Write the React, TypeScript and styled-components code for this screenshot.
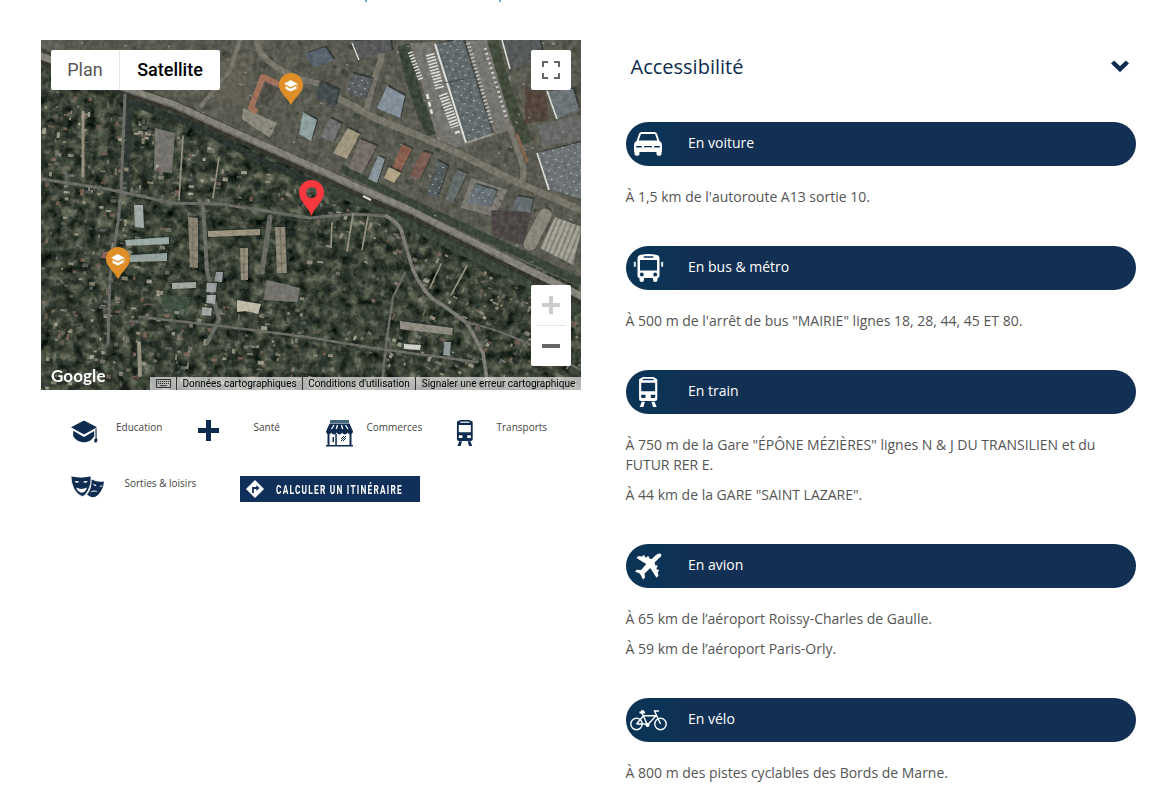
import React from 'react';
import styled, { createGlobalStyle } from 'styled-components';

const NAVY = '#10305a';
const INK = '#0e2c50';

const GlobalStyle = createGlobalStyle`
  body { margin: 0; background: #fff; font-family: 'Open Sans', 'Noto Sans', sans-serif; overflow: hidden; }
  p, h2 { margin: 0; }
  svg { display: block; flex: none; }
`;

const Page = styled.div`
  width: 1160px;
  height: 797px;
  overflow: hidden;
  display: flex;
  flex-direction: column;
`;

const LinkTail = styled.div`
  height: 2px;
  flex: none;
  padding-left: 365px;
  display: flex;
  gap: 132px;
`;

const Tail = styled.i`
  width: 2px;
  height: 2px;
  background: #5fb3cc;
`;

const Columns = styled.div`
  display: flex;
  padding: 38px 24px 0 41px;
  gap: 45px;
`;

const LeftColumn = styled.section`
  width: 540px;
  flex: none;
`;

const MapFrame = styled.div`
  position: relative;
  width: 540px;
  height: 350px;
  overflow: hidden;
  font-family: Roboto, sans-serif;
`;

const MapTypeBar = styled.div`
  position: absolute;
  left: 10px;
  top: 10px;
  display: flex;
  height: 40px;
  background: #fff;
  border-radius: 2px;
`;

const MapType = styled.button<{ $active?: boolean }>`
  border: 0;
  border-left: ${(p) => (p.$active ? '1px solid #e6e6e6' : '0')};
  background: none;
  padding: 0 0 2px;
  width: ${(p) => (p.$active ? 101 : 68)}px;
  font: ${(p) => (p.$active ? 500 : 400)} 18px Roboto, sans-serif;
  color: ${(p) => (p.$active ? '#000' : '#565656')};
`;

const FullscreenButton = styled.button`
  position: absolute;
  right: 10px;
  top: 10px;
  width: 40px;
  height: 40px;
  border: 0;
  border-radius: 2px;
  background: #fff;
  padding: 11px;
`;

const ZoomControl = styled.div`
  position: absolute;
  right: 10px;
  top: 245px;
  width: 40px;
  height: 81px;
  border-radius: 2px;
  background: #fff;
  display: flex;
  flex-direction: column;
  align-items: center;
`;

const ZoomKey = styled.div`
  height: 40px;
  display: flex;
  align-items: center;
`;

const ZoomRule = styled.div`
  width: 30px;
  height: 1px;
  background: #e6e6e6;
`;

const GoogleMark = styled.div`
  position: absolute;
  left: 10px;
  bottom: 3px;
  color: #fff;
  font: 700 17px/22px Lato, sans-serif;
  letter-spacing: 0.1px;
`;

const Attribution = styled.div`
  position: absolute;
  right: 0;
  bottom: 0;
  height: 13px;
  width: 431px;
  display: flex;
  align-items: center;
  background: rgba(235, 235, 235, 0.7);
  color: #000;
  font: 10px/13px Roboto, sans-serif;
  white-space: nowrap;
`;

const AttributionItem = styled.span<{ $width: number }>`
  box-sizing: border-box;
  width: ${(p) => p.$width}px;
  height: 13px;
  display: flex;
  align-items: center;
  justify-content: center;
  & + & { border-left: 1px solid #333; }
`;

const Pin = styled.div<{ $x: number; $y: number }>`
  position: absolute;
  left: ${(p) => p.$x}px;
  top: ${(p) => p.$y}px;
`;

const Legend = styled.div`
  padding: 29px 0 0 30px;
`;

const LegendRow = styled.div`
  display: flex;
  height: 28px;
  margin-bottom: 28px;
`;

const LegendCell = styled.div<{ $width: number; $icon: number }>`
  width: ${(p) => p.$width}px;
  flex: none;
  display: grid;
  grid-template-columns: ${(p) => p.$icon}px 1fr;
  font-size: 10px;
  line-height: 17px;
  color: #444;
  white-space: nowrap;
`;

const LegendIcon = styled.div`
  padding-top: 1px;
`;

const RouteButton = styled.button`
  width: 180px;
  height: 26px;
  margin: 1px 0 0;
  padding: 0 0 0 5px;
  border: 0;
  background: ${NAVY};
  color: #fff;
  display: flex;
  align-items: center;
  gap: 11px;
  text-align: left;
`;

const RouteText = styled.span`
  font: 700 13.500px/28px Roboto, sans-serif;
  letter-spacing: 2px;
  white-space: nowrap;
  transform: scaleX(0.615);
  transform-origin: left center;
`;

const RightColumn = styled.section`
  width: 510px;
`;

const Heading = styled.div`
  height: 52px;
  margin-bottom: 30px;
  padding: 0 7px 0 4.500px;
  display: flex;
  align-items: center;
  justify-content: space-between;
`;

const Title = styled.h2`
  font-size: 20px;
  line-height: 28px;
  padding-top: 2px;
  font-weight: 400;
  color: ${INK};
`;

const Entry = styled.article`
  padding-bottom: 29px;
`;

const Bar = styled.header`
  height: 44px;
  margin-bottom: 21px;
  border-radius: 22px;
  background: linear-gradient(90deg, #0b3355 0 34px, #123053 60px);
  display: flex;
  align-items: center;
  color: #fff;
  font-size: 14px;
`;

const BarIcon = styled.div`
  width: 44px;
  margin-right: 18px;
  display: flex;
  justify-content: center;
`;

const BarLabel = styled.span`
  margin-top: -3px;
  line-height: 20px;
`;

const Line = styled.p`
  margin: 0 0 10px -0.500px;
  font-size: 14px;
  line-height: 20px;
  color: #555;
`;

/* ---------- aerial view ---------- */

const makeRandom = (seed: number) => () => {
  seed = (seed + 0x6d2b79f5) | 0;
  let t = Math.imul(seed ^ (seed >>> 15), 1 | seed);
  t = (t + Math.imul(t ^ (t >>> 7), 61 | t)) ^ t;
  return ((t ^ (t >>> 14)) >>> 0) / 4294967296;
};

const railY = (x: number) => 48 + (x - 76) * 0.452;

type Patch = { x: number; y: number; w: number; h: number; a: number; fill: string };

const ROOFS = ['#8b8578', '#a0988a', '#75736e', '#8f7263', '#b3a995', '#6d706e', '#c6c0ae', '#7d655b'];
const TREES = ['#26302b', '#303a31', '#3c4638', '#1f2825', '#464e40', '#353e37'];

const rnd = makeRandom(47);
const trees: Patch[] = [];
const houses: Patch[] = [];
for (let i = 0; i < 2600; i++) {
  const x = rnd() * 540;
  const y = rnd() * 350;
  const s = 2 + rnd() * 5;
  const fill = TREES[Math.floor(rnd() * TREES.length)];
  if (y > railY(x) + 8) trees.push({ x, y, w: s, h: s * (0.6 + rnd() * 0.6), a: rnd() * 90, fill });
}
for (let i = 0; i < 1500; i++) {
  const x = rnd() * 540;
  const y = rnd() * 350;
  const w = 1.5 + rnd() * 5;
  const h = 1.2 + rnd() * 2.8;
  const fill = ROOFS[Math.floor(rnd() * ROOFS.length)];
  const a = (x > 300 ? 25 : 4) + (rnd() > 0.7 ? 90 : 0);
  const estate = x > 125 && x < 262 && y > 165 && y < 262;
  const grove = x > 262 && x < 350 && y > 210 && y < 290 && rnd() > 0.25;
  if (y > railY(x) + 16 && !estate && !grove) houses.push({ x, y, w, h, a, fill });
}
const yardShrubs: Patch[] = [];
const yardCars: Patch[] = [];
for (let i = 0; i < 620; i++) {
  const x = rnd() * 540;
  const y = rnd() * 250;
  const s = 2 + rnd() * 6;
  const car = rnd() > 0.5;
  const light = rnd() > 0.5;
  if (y < railY(x) - 8) {
    if (car) yardCars.push({ x, y, w: 2.6, h: 1.2, a: 25, fill: light ? '#a4a6a4' : '#444a4a' });
    else yardShrubs.push({ x, y, w: s, h: s * 0.7, a: 25, fill: light ? '#4b5044' : '#3c443b' });
  }
}

const Patches = ({ items, opacity }: { items: Patch[]; opacity: number }) => (
  <g opacity={opacity}>
    {items.map((p, i) => (
      <rect key={i} x={p.x} y={p.y} width={p.w} height={p.h} fill={p.fill} transform={`rotate(${p.a.toFixed(0)} ${p.x} ${p.y})`} />
    ))}
  </g>
);

const GROUND: [string, string][] = [
  ['369,3 446,0 472,89 416,108 396,99', '#777570'],
  ['202,68 236,83 229,98 201,79', '#8b887c'],
  ['166,24 212,10 208,66 176,60', '#625f54'],
  ['114,88 134,93 131,133 113,131', '#74736d'],
  ['226,240 259,248 256,262 222,260', '#74736d'],
  ['122,255 150,257 144,277 120,271', '#3f5040'],
  ['430,138 466,150 454,177 420,168', '#7c7a73'],
  ['450,170 490,172 483,205 452,196', '#4d4746'],
  ['484,45 504,52 508,80 484,84', '#54463d'],
  ['496,85 540,75 540,100 502,106', '#686a68'],
];

const BUILDINGS: [string, string][] = [
  ['311,1 349,-1 351,11 317,19', '#57595b'],
  ['311,33 332,39 324,59 304,51', '#5b5e60'],
  ['346,46 364,56 359,78 336,68', '#84909a'],
  ['264,14 284,7 293,20 272,28', '#59636c'],
  ['279,41 298,50 294,67 275,58', '#434b4f'],
  ['262,72 276,80 270,101 258,94', '#8fa0a0'],
  ['394,4 422,-1 451,93 424,103', '#636a6b'],
  ['461,-1 499,-1 502,19 469,29', '#565a5b'],
  ['506,51 532,49 538,69 516,79', '#6c7478'],
  ['496,113 541,102 541,159 507,149', '#6c7173'],
  ['289,78 301,84 292,103 279,96', '#6f7170'],
  ['307,88 319,94 306,119 292,113', '#a1977f'],
  ['319,99 336,106 321,134 307,128', '#756d67'],
  ['337,116 344,119 336,143 327,139', '#87959b'],
  ['361,104 371,109 359,133 351,128', '#8a6150'],
  ['348,127 360,133 353,143 343,138', '#b1a486'],
  ['381,111 391,114 379,139 369,136', '#785c52'],
  ['397,121 407,126 396,159 386,154', '#545c5e'],
  ['416,129 426,134 412,163 404,159', '#636b6b'],
  ['434,144 456,151 449,167 427,162', '#677075'],
  ['476,156 492,159 489,173 471,169', '#666d71'],
  ['93,165 102,165 103,188 94,187', '#a0a8a6'],
  ['84,200 128,197 128,204 85,206', '#9ba9a5'],
  ['89,215 126,213 126,221 89,222', '#93a09c'],
  ['147,177 157,178 157,228 149,227', '#8a8473'],
  ['167,191 219,189 219,195 167,197', '#9a9480'],
  ['199,208 207,208 207,240 200,240', '#918b78'],
  ['234,187 244,187 246,233 236,233', '#8d8776'],
  ['131,243 155,242 155,248 131,249', '#a4a6a0'],
  ['175,232 182,232 181,242 173,242', '#8f9596'],
  ['166,243 176,243 175,252 165,252', '#9a9f9f'],
  ['166,255 175,255 174,264 165,263', '#a8abab'],
  ['161,267 171,268 170,276 161,275', '#a3a6a3'],
  ['196,260 220,264 217,274 206,271 196,272', '#bdb9a6'],
  ['359,281 412,288 411,295 359,289', '#8f8c82'],
  ['363,304 380,305 379,310 363,309', '#d2d2cd'],
  ['403,302 410,302 409,316 402,315', '#8e9698'],
  ['62,212 70,211 68,219 60,218', '#8d6256'],
];

const AerialView = () => (
  <svg width="540" height="350" viewBox="0 0 540 350">
    <defs>
      <filter id="foliage" x="0" y="0" width="100%" height="100%" colorInterpolationFilters="sRGB">
        <feTurbulence type="fractalNoise" baseFrequency="0.09" numOctaves="4" seed="8" />
        <feColorMatrix values="0.62 0 0 0 -0.08  0.6 0 0 0 -0.04  0.52 0 0 0 -0.05  0 0 0 0 1" />
      </filter>
      <filter id="grain" x="0" y="0" width="100%" height="100%" colorInterpolationFilters="sRGB">
        <feTurbulence type="fractalNoise" baseFrequency="0.22" numOctaves="2" seed="3" />
        <feColorMatrix values="1.6 0 0 0 -0.3  1.6 0 0 0 -0.3  1.6 0 0 0 -0.3  0 0 0 0 1" />
      </filter>
      <pattern id="skylights" width="10" height="9" patternUnits="userSpaceOnUse" patternTransform="rotate(-18)">
        <rect x="2" y="2" width="1.6" height="1" fill="#c5cccb" />
        <rect x="7" y="6" width="1.4" height="1" fill="#aeb6b5" />
      </pattern>
      <pattern id="sheds" width="5" height="5" patternUnits="userSpaceOnUse" patternTransform="rotate(22)">
        <rect width="5" height="5" fill="#a5a297" />
        <rect width="1.4" height="5" fill="#77776f" />
      </pattern>
    </defs>
    <rect width="540" height="350" filter="url(#foliage)" />
    <Patches items={trees} opacity={0.6} />
    <polygon points="0,0 540,0 540,248 200,96 86,45 0,8" fill="#636158" opacity="0.78" />
    <Patches items={yardShrubs} opacity={0.8} />
    <g fill="none" stroke="#3b4538">
      <path d="M362,5 Q372,55 391,95" strokeWidth="11" />
      <path d="M451,0 Q462,50 487,103" strokeWidth="12" stroke="#424a3b" />
      <path d="M262,136 L350,176 L440,220 L540,270" strokeWidth="9" />
      <path d="M300,128 L370,163 L450,200 L540,242" strokeWidth="8" />
      <path d="M78,58 L150,84 L230,125 L270,142" strokeWidth="7" stroke="#2c342f" />
      <path d="M88,60 L84,150" strokeWidth="8" stroke="#303933" />
    </g>
    {GROUND.map(([points, fill]) => <polygon key={points} points={points} fill={fill} />)}
    <Patches items={yardCars} opacity={0.75} />
    <Patches items={houses} opacity={0.72} />
    <g fill="none" strokeLinejoin="round" strokeLinecap="round">
      <path d="M0,18 L86,51 L132,66 L186,91 L269,129 L322,153 L369,173 L402,190 L462,220 L502,240 L542,260" stroke="#35372f" strokeWidth="12" />
      <path d="M0,16 L86,49 L132,64 L186,89 L269,126 L322,150 L369,170 L402,187 L462,217 L502,237 L542,257" stroke="#858379" strokeWidth="7" />
      <path d="M86,52 L132,67 L186,92 L269,129 L322,153 L369,173 L402,190 L462,220" stroke="#6b6963" strokeWidth="1.4" />
      <g stroke="#77746a">
        <path d="M282,50 L299,59 L336,79 L386,99 L419,114 L469,139 L542,171" strokeWidth="7" />
        <path d="M216,0 Q216,18 246,33 Q258,41 282,44" strokeWidth="6" />
        <path d="M199,0 L188,32 L160,66" strokeWidth="4" />
        <path d="M342,0 L340,20 L333,40 L326,68" strokeWidth="6" />
        <path d="M469,88 L482,125 L482,140" strokeWidth="6" />
        <path d="M504,175 L489,204" strokeWidth="13" stroke="#8a8679" />
      </g>
      <g stroke="#6c6c66" strokeWidth="3">
        <path d="M84,55 L80,156 L77,182 L69,237 L67,303" />
        <path d="M0,139 L66,149 L132,163 L180,164 L269,178 L312,174 L345,176" />
        <path d="M345,176 Q360,183 362,197 L372,230 Q385,258 399,263 L426,283 L442,313 L446,340" strokeWidth="3.6" stroke="#7c7b74" />
        <path d="M99,277 L172,285 L266,297 L332,308 L436,322" strokeWidth="2.500" />
        <path d="M364,233 L352,257 L347,290 L340,350" strokeWidth="2.400" />
        <path d="M162,166 L166,230 L178,280 L166,303" strokeWidth="4" />
        <path d="M229,177 L221,232" strokeWidth="5" />
        <path d="M426,283 Q462,288 540,330" strokeWidth="2" />
      </g>
      <g stroke="#979381" strokeWidth="1.700">
        <path d="M42,72 L42,136" strokeWidth="3" />
        <path d="M142,96 L138,160" />
        <path d="M178,117 L172,158" />
        <path d="M312,174 L306,211 M291,183 L290,207 M327,177 L321,210" />
        <path d="M426,226 L410,255 M400,224 L389,248" />
        <path d="M98,303 L99,335" strokeWidth="4" />
      </g>
      <path d="M243,47 L222,37 L210,68 L216,72" stroke="#a0705b" strokeWidth="6" strokeLinecap="butt" />
      <path d="M476,95 L486,121" stroke="#86684f" strokeWidth="3" />
    </g>
    <polygon points="225,43 238,49 226,66 217,64" fill="#4d4d45" />
    {BUILDINGS.map(([points, fill]) => (
      <g key={points}>
        <polygon points={points} fill="#1f2624" transform="translate(1.5,-1.5)" opacity="0.6" />
        <polygon points={points} fill={fill} />
      </g>
    ))}
    <g stroke="#6a675b" strokeWidth="0.800" fill="none">
      <path d="M152,178V228M147,186h10M147,194h10M147,202h10M148,210h10M148,218h10" />
      <path d="M239,187l2,46M235,196h10M235,205h10M236,214h10M236,223h10" />
      <path d="M203,208V240M199,216h8M199,224h8M199,232h8" />
    </g>
    <polygon points="514,177 541,187 532,225 499,208" fill="url(#sheds)" />
    <g fill="url(#skylights)">
      <polygon points="394,4 422,-1 451,93 424,103" />
      <polygon points="496,113 541,102 541,159 507,149" />
      <polygon points="311,33 332,39 324,59 304,51" />
      <polygon points="397,121 407,126 396,159 386,154" />
      <polygon points="434,144 456,151 449,167 427,162" />
    </g>
    <g fill="none" stroke="#dcdfda">
      <path d="M394,4 L425,103" strokeWidth="2" />
      <path d="M461,0 L469,29 M496,113 L508,150 M506,51 L516,79" strokeWidth="1.6" />
      <path d="M311,3 L318,20" strokeWidth="1.4" />
      <path d="M389,14 L399,49" strokeWidth="9" strokeDasharray="1.6 1.5" />
      <path d="M402,54 L414,87" strokeWidth="9" strokeDasharray="1.6 1.5" />
      <path d="M369,12 L380,40" strokeWidth="5" strokeDasharray="1.5 1.6" />
      <path d="M427,3 L451,84" strokeWidth="4" strokeDasharray="1.5 2.2" opacity="0.7" />
      <path d="M444,8 L466,80" strokeWidth="3" strokeDasharray="2 3" opacity="0.8" />
      <path d="M386,54 L391,74 M414,93 L420,91" strokeWidth="2.5" strokeDasharray="5 3" />
      <path d="M322,156 L330,160" strokeWidth="2" />
      <path d="M424,103 L452,94" strokeWidth="1" stroke="#b4b09c" />
      <path d="M397,44 L434,37" strokeWidth="0.7" stroke="#383e3e" />
    </g>
    <rect width="540" height="350" filter="url(#grain)" opacity="0.22" style={{ mixBlendMode: 'soft-light' }} />
  </svg>
);

/* ---------- icons ---------- */

const CapIcon = () => (
  <svg width="28" height="23" viewBox="0 0 28 23" fill={INK}>
    <path d="M13 0.6 0 7.2 13 14.6 26 7.2Z" />
    <path d="M2.2 10.7 13 17l10.2-6.1v5.4C21 20 17.5 22.3 13 22.3S4.500 20 2.200 16.300Z" />
    <path d="M24.500 8.500h1.100v9.800l1 1.500-1 2.700h-2l-.5-2.700 1.400-1.500Z" />
  </svg>
);

const PlusIcon = () => (
  <svg width="21" height="21" viewBox="0 0 21 21" fill={INK}><path d="M8 0h5v8h8v5h-8v8H8v-8H0V8h8Z" /></svg>
);

const ShopIcon = () => (
  <svg width="27" height="27" viewBox="0 0 27 27" fill={INK}>
    <path d="M4 0h19v3H4Z" fill="#42667b" />
    <path d="M3.500 3.500h20L27 11.500H0Z" />
    <path d="M0 11h27c0 4-4.500 4-5.400 1.500-1 2.500-4.500 2.500-5.400 0-1 2.500-4.500 2.500-5.400 0-1 2.500-4.500 2.500-5.400 0C4.500 15 0 15 0 11Z" />
    <path d="m8 5-2.500 4m6-4-1.200 4M15.500 5l1.200 4m2.800-4 2.500 4" stroke="#fff" strokeWidth="1.300" fill="none" />
    <path d="M1.500 13h2v12H27v1.500H0V25h1.500ZM9.300 14h1.500v12H9.300ZM23.500 13h2v12h-2ZM6.500 17h1.500v5H6.500Z" />
    <path d="m15 19 3-3m-3 5 5-5m-3 5 3-3" stroke={INK} strokeWidth="1" />
  </svg>
);

const MasksIcon = () => (
  <svg width="34" height="23" viewBox="0 0 34 23">
    <path d="M20.500 4.500Q27 7.500 33 6.500 32 15 27 20q-4 3.500-8 1.500l-3-2Q21 14 20.500 4.500Z" fill={INK} />
    <path d="M0 1Q10 3.500 20 1q.6 8-2.500 14-3 5.500-6 6.500Q6.500 20 3 14 0 8 0 1Z" fill={INK} stroke="#fff" strokeWidth="0.700" />
    <path d="M3.500 6.500q2.500-1.500 4.800.6Q5.500 8.500 3.500 6.500ZM12 7.100q2.500-2.100 4.800-.6-2 2-4.800.6ZM5 12.500q5.500 2.800 11 0-1.500 5-5 5.200Q7 17.500 5 12.500Z" fill="#fff" />
    <path d="M22 9.500q2-.6 3.500 1.200-2 .8-3.500-1.200ZM28.500 11.200q1.500-1 3-.4-1 1.600-3 .4ZM19 17.500q3.500-3.800 8-.8-4-.6-8 .8Z" fill="#fff" />
  </svg>
);

const TrainIcon = ({ color, back, size = 27 }: { color: string; back: string; size?: number }) => (
  <svg width={(size * 19) / 28} height={size} viewBox="0 0 19 28">
    <path d="M3.500 23h3L5 28H1.600ZM12.500 23h3l1.900 5H14Z" fill={color} />
    <path d="M4.500 0h10l3.500 2v18.500q0 2-2 2H3q-2 0-2-2V2Z" fill={color} />
    <rect x="4.500" y="1.700" width="10" height="1.300" fill={back} />
    <rect x="3" y="5.300" width="13" height="8" rx="0.700" fill={back} />
    <rect x="3" y="16.500" width="4" height="3" rx="0.500" fill={back} />
    <rect x="12" y="16.500" width="4" height="3" rx="0.500" fill={back} />
  </svg>
);

const DirectionIcon = () => (
  <svg width="20" height="20" viewBox="0 0 20 20">
    <path d="m10 1.500 8.500 8.500-8.500 8.500-8.500-8.500Z" fill="#fff" stroke="#fff" strokeLinejoin="round" />
    <path d="M8 14V9h4" fill="none" stroke={NAVY} strokeWidth="1.800" />
    <path d="m11.300 6 3.200 3-3.200 3Z" fill={NAVY} />
  </svg>
);

const BACK = '#0b3355';

const CarIcon = () => (
  <svg width="28" height="24" viewBox="0 0 28 24">
    <path d="M5 1.700Q5.700 0 7.500 0h13q1.800 0 2.500 1.700L25.500 9Q28 10.200 28 13v7h-.5v2q0 1.700-1.700 1.700h-1.600Q22.500 23.700 22.500 22v-2h-17v2q0 1.700-1.700 1.700H2.200Q.5 23.700.5 22v-2H0v-7q0-2.800 2.500-4Z" fill="#fff" />
    <path d="M7 2h14L23.300 8.500H4.700Z" fill={BACK} />
    <rect x="2" y="14" width="6" height="1.600" rx=".8" fill={BACK} />
    <rect x="20" y="14" width="6" height="1.600" rx=".8" fill={BACK} />
    <rect x="10" y="14" width="8" height="1.300" fill={BACK} />
  </svg>
);

const BusIcon = () => (
  <svg width="31" height="28" viewBox="0 0 31 28">
    <path d="M7 1q8.500-2 17 0 2.500.6 2.500 3v18q0 2-2 2v2q0 2-2.200 2T20 26v-2h-9v2q0 2-2.200 2t-2.300-2v-2q-2 0-2-2V4Q4.500 1.600 7 1Z" fill="#fff" />
    <rect x="10.500" y="2.300" width="10" height="1.400" rx=".7" fill={BACK} />
    <path d="M7 6h17v10.500H7Z" fill={BACK} />
    <circle cx="8.800" cy="20.500" r="1.900" fill={BACK} />
    <circle cx="22.200" cy="20.500" r="1.900" fill={BACK} />
    <path d="M2.500 8v4.500H1.200V8Zm27.300 0v4.500H28.500V8Z" fill="#fff" stroke="#fff" strokeWidth="0.500" />
  </svg>
);

const PlaneIcon = () => (
  <svg width="27" height="27" viewBox="0 0 27 27" fill="#fff">
    <path d="M26 1Q23.700-.5 21 2l-4.300 4-3-.8.600-1-1.300-1.200-1.600 1.500-1.800-.5.500-1L8.700 2 7 3.600 3.500 3 1.500 5 11.200 11l-5 6L1.700 16.700 0 18.500l5 2.300L8 26.500l1.900-1.700-.3-4.400 5.700-5.300 6.200 9.700 2-2-.8-3.600 1.500-1.500-1.300-1.400-.9.700-.6-2 1.400-1.600-1.300-1.300-1 .7-.9-3.300 4.300-4.300Q27.500 3 26 1Z" />
  </svg>
);

const BikeIcon = () => (
  <svg width="37" height="23" viewBox="0 0 37 23" fill="none" stroke="#fff" strokeWidth="1.400">
    <circle cx="6.500" cy="15" r="5.700" />
    <circle cx="30.500" cy="15" r="5.700" />
    <path d="m6.500 15 7-8.300H26L17.500 16 12 4M6.500 15h11M30.500 15 24.500 2H29" />
    <path d="M9.500 3.500H15M11 2.200h3" strokeWidth="1.800" />
    <circle cx="17.500" cy="16" r="1.300" />
  </svg>
);

const SchoolPin = ({ x, y }: { x: number; y: number }) => (
  <Pin $x={x} $y={y}>
    <svg width="24" height="32" viewBox="0 0 24 32">
      <path d="M12 32C8 24 0 19.500 0 12a12 12 0 0 1 24 0c0 7.500-8 12-12 20Z" fill="#e08e27" />
      <g transform="translate(5,7) scale(.52)"><path d="M13 0 0 7l13 7 13-7ZM3 11.500 13 17l10-5.500v6L13 22 3 17.500ZM24.500 8h1.200v10h-1.200Z" fill="#fff" /></g>
    </svg>
  </Pin>
);

const ENTRIES: { label: string; icon: React.ReactNode; lines: string[] }[] = [
  { label: 'En voiture', icon: <CarIcon />, lines: ["À 1,5 km de l'autoroute A13 sortie 10."] },
  { label: 'En bus & métro', icon: <BusIcon />, lines: ["À 500 m de l'arrêt de bus \"MAIRIE\" lignes 18, 28, 44, 45 ET 80."] },
  {
    label: 'En train',
    icon: <TrainIcon color="#fff" back={BACK} size={30} />,
    lines: ['À 750 m de la Gare "ÉPÔNE MÉZIÈRES" lignes N & J DU TRANSILIEN et du FUTUR RER E.', 'À 44 km de la GARE "SAINT LAZARE".'],
  },
  { label: 'En avion', icon: <PlaneIcon />, lines: ['À 65 km de l’aéroport Roissy-Charles de Gaulle.', 'À 59 km de l’aéroport Paris-Orly.'] },
  { label: 'En vélo', icon: <BikeIcon />, lines: ['À 800 m des pistes cyclables des Bords de Marne.'] },
];

export default function App() {
  return (
    <Page>
      <GlobalStyle />
      <LinkTail><Tail /><Tail /></LinkTail>
      <Columns>
        <LeftColumn>
          <MapFrame>
            <AerialView />
            <SchoolPin x={238} y={33} />
            <SchoolPin x={65} y={207} />
            <Pin $x={257.5} $y={140}>
              <svg width="25" height="36" viewBox="0 0 25 36">
                <path fillRule="evenodd" d="M12.500 36C9 26.500 0 21 0 12.500a12.500 12.500 0 0 1 25 0C25 21 16 26.500 12.500 36Zm0-29a5.500 5.500 0 1 0 0 11 5.500 5.500 0 1 0 0-11Z" fill="#f8383c" />
              </svg>
            </Pin>
            <MapTypeBar>
              <MapType>Plan</MapType>
              <MapType $active>Satellite</MapType>
            </MapTypeBar>
            <FullscreenButton aria-label="Plein écran">
              <svg width="18" height="18" viewBox="0 0 18 18" fill="none" stroke="#666" strokeWidth="2">
                <path d="M1 6V1h5M12 1h5v5M17 12v5h-5M6 17H1v-5" />
              </svg>
            </FullscreenButton>
            <ZoomControl>
              <ZoomKey><svg width="18" height="18" fill="#ccc"><path d="M7 0h4v7h7v4h-7v7H7v-7H0V7h7Z" /></svg></ZoomKey>
              <ZoomRule />
              <ZoomKey><svg width="18" height="4" fill="#666"><path d="M0 0h18v4H0Z" /></svg></ZoomKey>
            </ZoomControl>
            <GoogleMark>Google</GoogleMark>
            <Attribution>
              <AttributionItem $width={26}>
                <svg width="15" height="9" viewBox="0 0 15 9">
                  <path d="M.5.500h14v8H.500Z" fill="none" stroke="#333" />
                  <path d="M2 2.500h11M2 4.500h11" stroke="#333" strokeWidth="1.200" strokeDasharray="1.200 .8" />
                  <path d="M4 6.700h7" stroke="#333" />
                </svg>
              </AttributionItem>
              <AttributionItem $width={126}>Données cartographiques</AttributionItem>
              <AttributionItem $width={113}>Conditions d'utilisation</AttributionItem>
              <AttributionItem $width={166}>Signaler une erreur cartographique</AttributionItem>
            </Attribution>
          </MapFrame>
          <Legend>
            <LegendRow>
              <LegendCell $width={127} $icon={45}><LegendIcon><CapIcon /></LegendIcon>Education</LegendCell>
              <LegendCell $width={128} $icon={55.5}><LegendIcon><PlusIcon /></LegendIcon>Santé</LegendCell>
              <LegendCell $width={130} $icon={40.5}><LegendIcon><ShopIcon /></LegendIcon>Commerces</LegendCell>
              <LegendCell $width={100} $icon={40.5}><LegendIcon><TrainIcon color={INK} back="#fff" size={26} /></LegendIcon>Transports</LegendCell>
            </LegendRow>
            <LegendRow>
              <LegendCell $width={169} $icon={53.5}><MasksIcon />Sorties &amp; loisirs</LegendCell>
              <RouteButton><DirectionIcon /><RouteText>CALCULER UN ITINÉRAIRE</RouteText></RouteButton>
            </LegendRow>
          </Legend>
        </LeftColumn>
        <RightColumn>
          <Heading>
            <Title>Accessibilité</Title>
            <svg width="18" height="13" viewBox="0 0 18 13"><path d="M1.500 2 9 9.200 16.500 2" fill="none" stroke={INK} strokeWidth="4.400" /></svg>
          </Heading>
          {ENTRIES.map((e) => (
            <Entry key={e.label}>
              <Bar><BarIcon>{e.icon}</BarIcon><BarLabel>{e.label}</BarLabel></Bar>
              {e.lines.map((l) => <Line key={l}>{l}</Line>)}
            </Entry>
          ))}
        </RightColumn>
      </Columns>
    </Page>
  );
}
